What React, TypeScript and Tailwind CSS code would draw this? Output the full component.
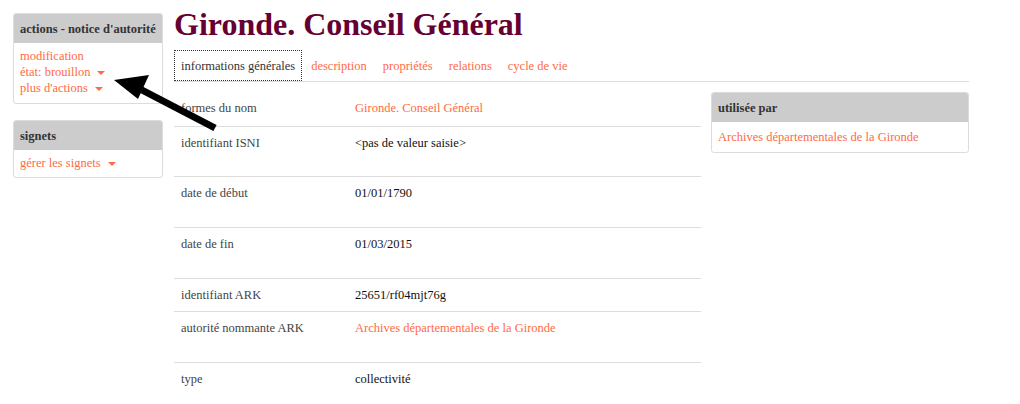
import React from 'react';

const LINK = 'text-[#ff6a45]';

const Caret: React.FC = () => (
  <span className="ml-[7px] inline-block align-middle w-0 h-0 border-x-[4px] border-x-transparent border-t-[4px] border-t-[#ff6a45]" />
);

const SideBox: React.FC<{ title: string; children: React.ReactNode; className?: string }> = ({ title, children, className }) => (
  <div className={`border border-[#dcdcdc] rounded-[3px] bg-white overflow-hidden ${className || ''}`}>
    <div className="bg-[#cccccc] px-[6px] h-[29px] flex items-center font-bold text-[#333] whitespace-nowrap">{title}</div>
    {children}
  </div>
);

interface Row {
  label: string;
  value: string;
  link?: boolean;
  h: string;
}

const rows: Row[] = [
  { label: 'formes du nom', value: 'Gironde. Conseil Général', link: true, h: 'h-[35px]' },
  { label: 'identifiant ISNI', value: '<pas de valeur saisie>', h: 'h-[50px]' },
  { label: 'date de début', value: '01/01/1790', h: 'h-[51px]' },
  { label: 'date de fin', value: '01/03/2015', h: 'h-[51px]' },
  { label: 'identifiant ARK', value: '25651/rf04mjt76g', h: 'h-[33px]' },
  { label: 'autorité nommante ARK', value: 'Archives départementales de la Gironde', link: true, h: 'h-[51px]' },
  { label: 'type', value: 'collectivité', h: 'h-[42px]' },
];

const tabs = ['description', 'propriétés', 'relations', 'cycle de vie'];

export default function App() {
  return (
    <div
      className="relative w-[1020px] h-[404px] overflow-hidden bg-white text-[12.5px] leading-[16px] text-[#333]"
      style={{ fontFamily: '"Liberation Serif", "Times New Roman", serif' }}
    >
      <div className="flex pl-[13px] pt-[13px] gap-[11px]">
        {/* sidebar */}
        <div className="w-[150px] shrink-0 flex flex-col gap-[16px]">
          <SideBox title="actions - notice d'autorité">
            <div className={`px-[6px] pt-[5px] pb-[7px] flex flex-col ${LINK}`}>
              <span>modification</span>
              <span>état: brouillon<Caret /></span>
              <span>plus d'actions<Caret /></span>
            </div>
          </SideBox>
          <SideBox title="signets">
            <div className={`px-[6px] pt-[5px] pb-[6px] ${LINK}`}>
              <span>gérer les signets<Caret /></span>
            </div>
          </SideBox>
        </div>

        {/* main */}
        <div className="w-[795px] -mt-[13px]">
          <h1 className="text-[32px] leading-[36px] font-bold text-[#660033] pt-[6px] pb-[9px]">
            Gironde. Conseil Général
          </h1>
          <div className="flex items-end gap-[2px] border-b border-[#dddddd] h-[31px]">
            <div className="border border-dotted border-[#333] px-[6px] h-[31px] flex items-center text-[#333]">
              informations générales
            </div>
            {tabs.map(t => (
              <div key={t} className={`px-[7px] h-[31px] flex items-center ${LINK}`}>{t}</div>
            ))}
          </div>
          <div className="flex gap-[10px] mt-[9px]">
            <div className="w-[527px]">
              {rows.map((r, i) => (
                <div key={r.label} className={`flex ${r.h} ${i > 0 ? 'border-t border-[#dddddd]' : ''} ${i === 0 ? 'pt-[9px]' : 'pt-[8px]'}`}>
                  <div className="w-[181px] pl-[7px] text-[#444]">{r.label}</div>
                  <div className={r.link ? LINK : 'text-[#111]'}>{r.value}</div>
                </div>
              ))}
            </div>
            <div className="w-[258px]">
              <SideBox title="utilisée par" className="mt-[1px]">
                <div className={`px-[6px] pt-[7px] pb-[7px] ${LINK}`}>Archives départementales de la Gironde</div>
              </SideBox>
            </div>
          </div>
        </div>
      </div>

      {/* annotation arrow */}
      <svg className="absolute left-0 top-0 pointer-events-none" width="1020" height="404" viewBox="0 0 1020 404">
        <line x1="215" y1="128" x2="140" y2="89" stroke="#000" strokeWidth="7" />
        <polygon points="114,80 149,75 138,99" fill="#000" />
      </svg>
    </div>
  );
}
